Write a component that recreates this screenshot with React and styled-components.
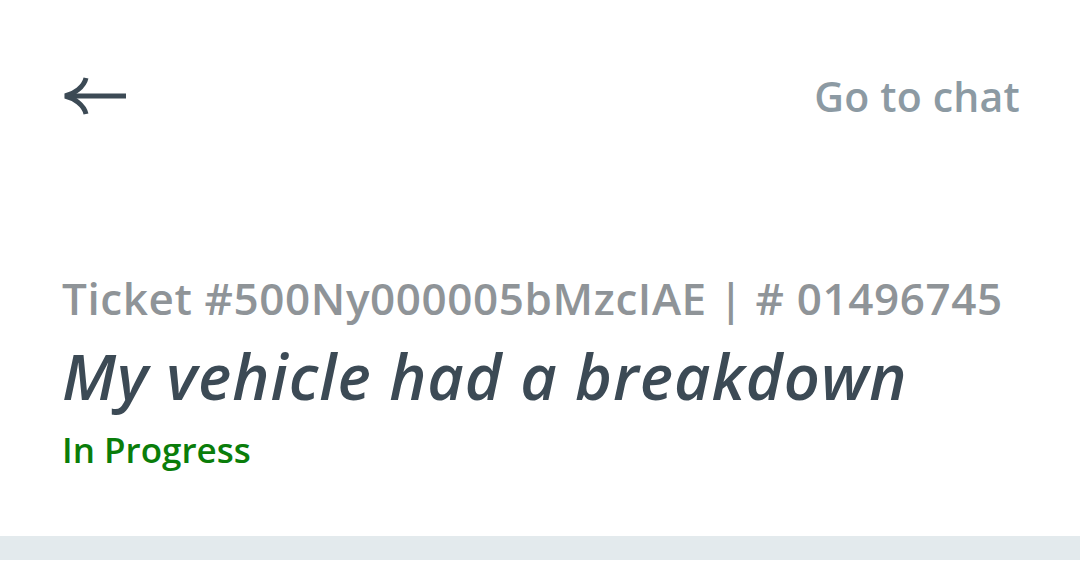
import React from "react";
import styled, { createGlobalStyle } from "styled-components";

const GlobalStyle = createGlobalStyle`
  body {
    margin: 0;
    background: #ffffff;
    font-family: "Open Sans", "Liberation Sans", sans-serif;
  }
`;

const Page = styled.div`
  display: flex;
  flex-direction: column;
  width: 1080px;
  height: 568px;
  background: #ffffff;
`;

const TopBar = styled.div`
  display: flex;
  align-items: center;
  justify-content: space-between;
  height: 60px;
  margin-top: 66px;
  padding: 0 60px 0 62px;
`;

const BackButton = styled.button`
  display: flex;
  align-items: center;
  padding: 0;
  border: none;
  background: none;
  cursor: pointer;
`;

const ChatLink = styled.a`
  color: #8c9aa3;
  font-size: 41px;
  font-weight: 600;
  line-height: 58px;
  letter-spacing: 0.2px;
  text-decoration: none;
`;

const Details = styled.div`
  display: flex;
  flex-direction: column;
  padding: 0 62px;
  margin-top: 142px;
`;

const TicketNo = styled.div`
  color: #8f9498;
  font-size: 44px;
  font-weight: 600;
  line-height: 60px;
  letter-spacing: 0.6px;
`;

const Title = styled.h1`
  margin: 0;
  color: #3c4a55;
  font-size: 63px;
  font-weight: 600;
  font-style: italic;
  line-height: 95px;
  letter-spacing: 1px;
`;

const Status = styled.div`
  color: #0a7d0a;
  font-size: 35px;
  font-weight: 600;
  line-height: 53px;
`;

const Divider = styled.div`
  height: 24px;
  margin-top: auto;
  margin-bottom: 8px;
  background: #e3eaed;
`;

const App = () => {
  return (
    <>
      <GlobalStyle />
      <Page>
        <TopBar>
          <BackButton aria-label="Back">
            <svg width="66" height="42" viewBox="0 0 66 42" fill="none">
              <path d="M64 21H10" stroke="#3c4a55" strokeWidth="5" />
              <path
                d="M24 3C22 12 12 19 3 21C12 23 22 30 24 39"
                stroke="#3c4a55"
                strokeWidth="5"
                fill="none"
              />
            </svg>
          </BackButton>
          <ChatLink href="#">Go to chat</ChatLink>
        </TopBar>
        <Details>
          <TicketNo>Ticket #500Ny000005bMzcIAE | # 01496745</TicketNo>
          <Title>My vehicle had a breakdown</Title>
          <Status>In Progress</Status>
        </Details>
        <Divider />
      </Page>
    </>
  );
};

export default App;
